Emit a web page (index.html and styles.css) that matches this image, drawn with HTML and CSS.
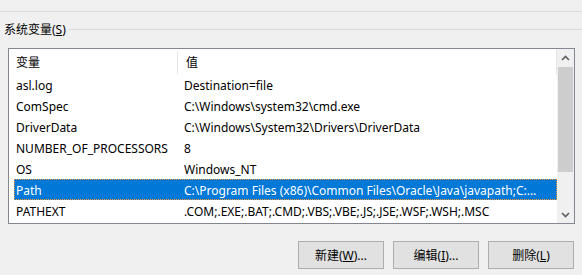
FILE: index.html
```html
<!DOCTYPE html>
<html lang="zh">
<head>
    <meta charset="UTF-8">
    <title>系统变量</title>
    <link rel="stylesheet" href="styles.css">
</head>
<body>
<div class="divider"></div>

<div class="group-title">
    <span class="group-label">系统变量(<u>S</u>)</span>
    <span class="group-line"></span>
</div>

<div class="listbox">
    <div class="list">
        <div class="list-head">
            <div class="col-name">变量</div>
            <div class="col-value">值</div>
        </div>
        <div class="row"><div class="col-name">asl.log</div><div class="col-value">Destination=file</div></div>
        <div class="row"><div class="col-name">ComSpec</div><div class="col-value">C:\Windows\system32\cmd.exe</div></div>
        <div class="row"><div class="col-name">DriverData</div><div class="col-value">C:\Windows\System32\Drivers\DriverData</div></div>
        <div class="row"><div class="col-name">NUMBER_OF_PROCESSORS</div><div class="col-value">8</div></div>
        <div class="row"><div class="col-name">OS</div><div class="col-value">Windows_NT</div></div>
        <div class="row selected"><div class="col-name">Path</div><div class="col-value">C:\Program Files (x86)\Common Files\Oracle\Java\javapath;C:...</div></div>
        <div class="row"><div class="col-name">PATHEXT</div><div class="col-value">.COM;.EXE;.BAT;.CMD;.VBS;.VBE;.JS;.JSE;.WSF;.WSH;.MSC</div></div>
    </div>
    <div class="scrollbar">
        <div class="arrow">
            <svg width="9" height="6" viewBox="0 0 9 6"><path d="M1 5 L4.5 1.5 L8 5" fill="none" stroke="#606060" stroke-width="1.6"/></svg>
        </div>
        <div class="track">
            <div class="thumb"></div>
        </div>
        <div class="arrow">
            <svg width="9" height="6" viewBox="0 0 9 6"><path d="M1 1 L4.5 4.5 L8 1" fill="none" stroke="#606060" stroke-width="1.6"/></svg>
        </div>
    </div>
</div>

<div class="buttons">
    <button>新建(<u>W</u>)...</button>
    <button>编辑(<u>I</u>)...</button>
    <button>删除(<u>L</u>)</button>
</div>
</body>
</html>
```

FILE: styles.css
```css
body {
    margin: 0;
    padding-top: 11px;
    background: #f0f0f0;
    font-family: "Noto Sans", "Noto Sans CJK SC", sans-serif;
    font-size: 12px;
    color: #000;
    width: 582px;
    height: 275px;
    overflow: hidden
}

.divider {
    height: 1px;
    background: #dadada
}

.group-title {
    display: flex;
    align-items: center;
    height: 16px;
    margin-top: 10px;
    padding-left: 4px
}

.group-label {
    padding-right: 3px;
    line-height: 16px
}

.group-line {
    flex: 1;
    height: 1px;
    background: #dadada;
    margin-top: -2px
}

.listbox {
    display: flex;
    margin: 10px 0 0 8px;
    width: 565px;
    height: 174px;
    border: 1px solid #828790;
    background: #fff
}

.list {
    flex: 1;
    min-width: 0
}

.list-head {
    display: flex;
    height: 24px;
    align-items: center;
    border-right: 1px solid #e5e5e5;
    margin: 1px 0 0
}

.list-head .col-name {
    width: 161px;
    padding-left: 7px;
    border-right: 1px solid #e5e5e5;
    height: 23px;
    line-height: 23px
}

.list-head .col-value {
    flex: 1;
    padding-left: 8px
}

.row {
    display: flex;
    height: 21px;
    line-height: 21px;
    margin-left: 5px;
    box-sizing: border-box;
    border: 1px dotted transparent
}

.row .col-name {
    width: 160px;
    padding-left: 1px;
    white-space: nowrap
}

.row .col-value {
    flex: 1;
    min-width: 0;
    padding-left: 8px;
    white-space: nowrap
}

.row.selected {
    background: #0078d7;
    color: #fff;
    border-color: #ff9a2e
}

.scrollbar {
    width: 17px;
    display: flex;
    flex-direction: column;
    background: #f0f0f0
}

.arrow {
    height: 17px;
    display: flex;
    align-items: center;
    justify-content: center
}

.track {
    flex: 1;
    padding: 1px 1px 0
}

.thumb {
    height: 105px;
    background: #cdcdcd
}

.buttons {
    display: flex;
    justify-content: flex-end;
    gap: 9px;
    margin: 17px 8px 0 0
}

button {
    width: 86px;
    height: 28px;
    background: #e1e1e1;
    border: 1px solid #adadad;
    font-family: "Noto Sans", "Noto Sans CJK SC", sans-serif;
    font-size: 12px;
    color: #000;
    padding: 0
}
```
